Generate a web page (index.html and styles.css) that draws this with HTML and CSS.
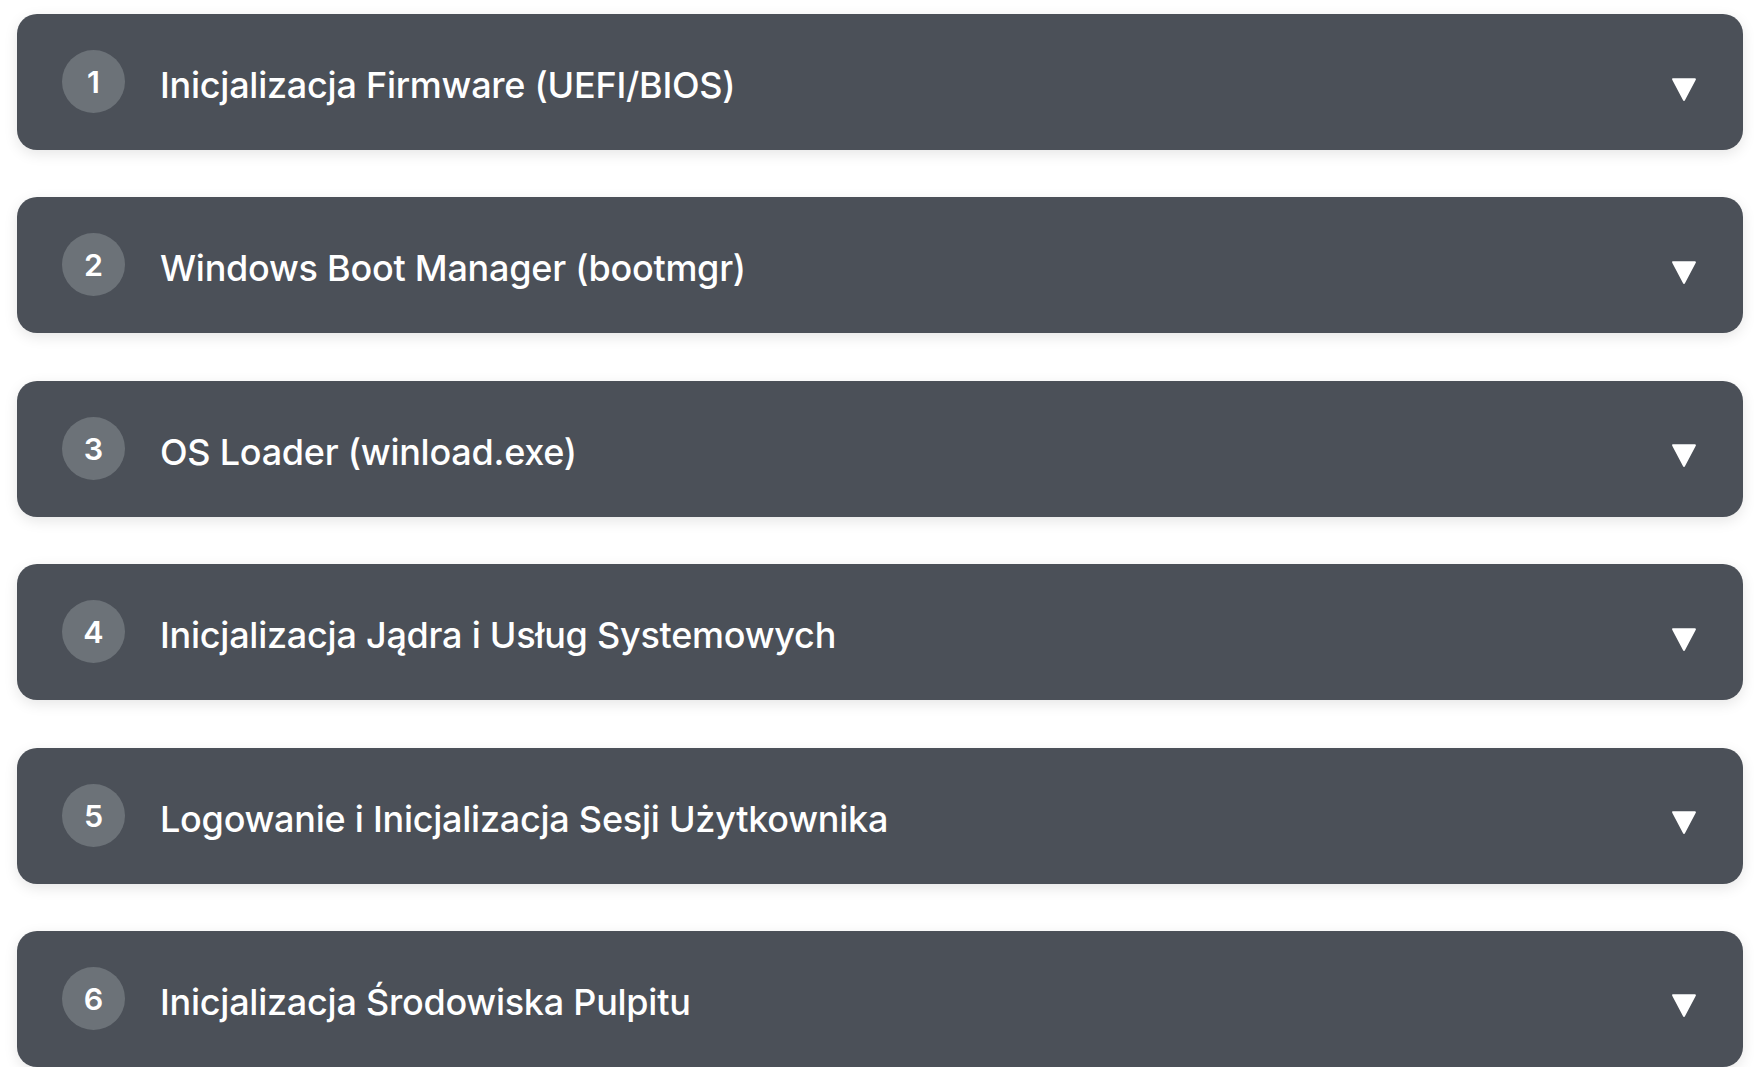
FILE: index.html
```html
<!DOCTYPE html>
<html lang="pl">
<head>
<meta charset="utf-8">
<title>Proces uruchamiania</title>
<link rel="stylesheet" href="styles.css">
</head>
<body>
<div class="list">
  <div class="card"><span class="num">1</span><span class="title">Inicjalizacja Firmware (UEFI/BIOS)</span><svg class="arrow" viewBox="0 0 24 24"><polygon points="2,3 22,3 12,22"/></svg></div>
  <div class="card"><span class="num">2</span><span class="title">Windows Boot Manager (bootmgr)</span><svg class="arrow" viewBox="0 0 24 24"><polygon points="2,3 22,3 12,22"/></svg></div>
  <div class="card"><span class="num">3</span><span class="title">OS Loader (winload.exe)</span><svg class="arrow" viewBox="0 0 24 24"><polygon points="2,3 22,3 12,22"/></svg></div>
  <div class="card"><span class="num">4</span><span class="title">Inicjalizacja Jądra i Usług Systemowych</span><svg class="arrow" viewBox="0 0 24 24"><polygon points="2,3 22,3 12,22"/></svg></div>
  <div class="card"><span class="num">5</span><span class="title">Logowanie i Inicjalizacja Sesji Użytkownika</span><svg class="arrow" viewBox="0 0 24 24"><polygon points="2,3 22,3 12,22"/></svg></div>
  <div class="card"><span class="num">6</span><span class="title">Inicjalizacja Środowiska Pulpitu</span><svg class="arrow" viewBox="0 0 24 24"><polygon points="2,3 22,3 12,22"/></svg></div>
</div>
</body>
</html>
```
FILE: styles.css
```css
html, body {
  margin: 0;
  background: #ffffff;
}
body {
  padding: 14px 11px 0 17px;
  font-family: Inter, "Noto Sans", "Liberation Sans", sans-serif;
}
.list {
  display: flex;
  flex-direction: column;
  gap: 47.4px;
}
.card {
  height: 136px;
  box-sizing: border-box;
  background: #4b5058;
  border-radius: 20px;
  box-shadow: 0 4px 14px rgba(0, 0, 0, 0.10);
  display: flex;
  align-items: center;
  padding: 0 46px 0 45px;
  color: #ffffff;
}
.num {
  width: 63px;
  height: 63px;
  flex: none;
  border-radius: 50%;
  background: #6c7278;
  display: flex;
  align-items: center;
  justify-content: center;
  font-size: 30.5px;
  font-weight: 600;
  margin-top: -1px;
}
.title {
  flex: 1;
  margin-left: 35px;
  margin-top: 6px;
  font-size: 36px;
  font-weight: 500;
  letter-spacing: -0.25px;
}
.arrow {
  width: 26px;
  height: 26px;
  flex: none;
  margin-top: 13px;
  fill: #ffffff;
  stroke: #ffffff;
  stroke-width: 2;
  stroke-linejoin: round;
}
```
